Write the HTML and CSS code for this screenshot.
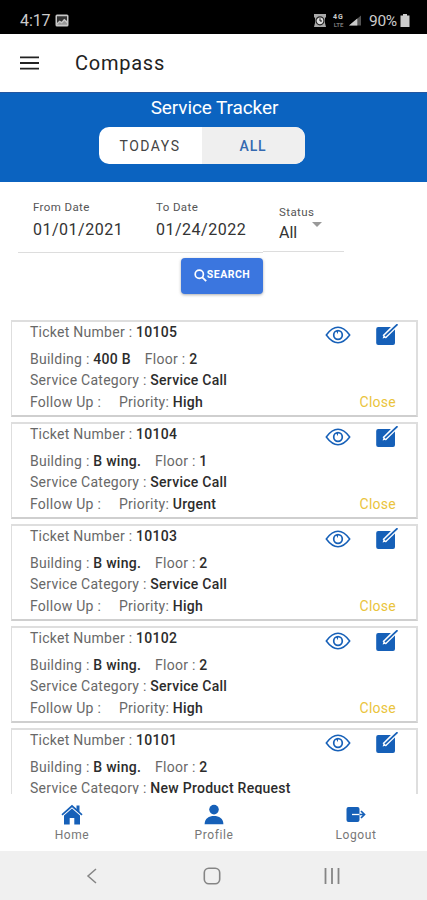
FILE: index.html
```html
<!DOCTYPE html>
<html lang="en">
<head>
<meta charset="utf-8">
<title>Compass</title>
<link rel="stylesheet" href="styles.css">
</head>
<body>
<svg width="0" height="0" class="defs">
  <symbol id="eye" viewBox="0 0 26 18"><path d="M1.3 9Q7 1.3 13 1.3T24.7 9Q19 16.7 13 16.7T1.3 9Z" fill="none" stroke="#1660b8" stroke-width="1.5"/><circle cx="13" cy="9" r="4.3" fill="none" stroke="#1660b8" stroke-width="1.7"/><path d="M11 5L13 8.2V4.800Z" fill="#1660b8"/></symbol>
  <symbol id="edit" viewBox="0 0 22 22"><path d="M2.2 3H17L19 5V19A2 2 0 0 1 17 21H2.2A2 2 0 0 1 .2 19V5A2 2 0 0 1 2.2 3Z" fill="#1660b8"/><path d="M8.2 12.8L21 .2" stroke="#fff" stroke-width="4.6"/><path d="M6.6 14.6L8 10.600L10.700 13.200Z" fill="#fff"/><path d="M9 12.100L21.500 .2" stroke="#1660b8" stroke-width="1.7"/></symbol>
</svg>
<div class="statusbar">
  <span class="time">4:17</span>
  <svg class="photo" width="14" height="13" viewBox="0 0 14 13"><rect x=".5" y=".5" width="13" height="12" rx="1.5" fill="#c8c8c8"/><path d="M2 2.3H12V7L9.2 4.8L6.6 7.8L4.6 6.5L2 9Z" fill="#333"/><path d="M2 10.7L4.7 8.3L6.8 9.6L9.3 6.8L12 9.3V10.7Z" fill="#999"/></svg>
  <span class="grow"></span>
  <svg width="12" height="13" viewBox="0 0 12 13"><path d="M0 0H12V3L11 4V9L12 13H0L1 9V4L0 3Z" fill="#aaa"/><circle cx="6" cy="6.8" r="4" fill="#ddd" stroke="#222" stroke-width="1.2"/><path d="M6 4.3V7H8" fill="none" stroke="#111"/></svg>
  <span class="lte"><b>4G</b><b>LTE</b></span>
  <svg class="signal" width="12" height="11" viewBox="0 0 13 11"><path d="M13 0V11H0Z" fill="#555"/><path d="M9 3.400V11H0Z" fill="#ccc"/></svg>
  <span class="percent">90%</span>
  <svg width="10" height="13" viewBox="0 0 10 13"><path d="M3 0H7V1.5H9.5V13H.5V1.5H3Z" fill="#ccc"/></svg>
</div>
<header class="appbar">
  <svg width="19" height="14" viewBox="0 0 19 14"><path d="M0 1.3H19M0 7H19M0 12.7H19" stroke="#222" stroke-width="1.8"/></svg>
  <h1>Compass</h1>
</header>
<section class="banner">
  <h2>Service Tracker</h2>
  <div class="segment"><span>TODAYS</span><span class="on">ALL</span></div>
</section>
<main>
  <div class="filters">
    <div class="dates">
      <div class="field from"><label>From Date</label><span>01/01/2021</span></div>
      <div class="field"><label>To Date</label><span>01/24/2022</span></div>
    </div>
    <div class="status"><label>Status</label><span>All</span><i></i></div>
  </div>
  <button class="search"><svg width="13" height="13" viewBox="0 0 13 13"><circle cx="5.3" cy="5.3" r="4.1" fill="none" stroke="#fff" stroke-width="1.7"/><path d="M8.3 8.3L12.2 12.2" stroke="#fff" stroke-width="1.8"/></svg><span>SEARCH</span></button>
  <div class="list">
    <article class="card"><p class="ticket">Ticket Number : <b>10105</b></p><p>Building : <b class="bld">400 B</b>Floor : <b>2</b></p><p>Service Category : <b>Service Call</b></p><p><span class="follow">Follow Up :</span>Priority: <b>High</b><em>Close</em></p><div class="actions"><svg width="26" height="18"><use href="#eye"/></svg><svg width="22" height="22"><use href="#edit"/></svg></div></article>
    <article class="card"><p class="ticket">Ticket Number : <b>10104</b></p><p>Building : <b class="bld">B wing.</b>Floor : <b>1</b></p><p>Service Category : <b>Service Call</b></p><p><span class="follow">Follow Up :</span>Priority: <b>Urgent</b><em>Close</em></p><div class="actions"><svg width="26" height="18"><use href="#eye"/></svg><svg width="22" height="22"><use href="#edit"/></svg></div></article>
    <article class="card"><p class="ticket">Ticket Number : <b>10103</b></p><p>Building : <b class="bld">B wing.</b>Floor : <b>2</b></p><p>Service Category : <b>Service Call</b></p><p><span class="follow">Follow Up :</span>Priority: <b>High</b><em>Close</em></p><div class="actions"><svg width="26" height="18"><use href="#eye"/></svg><svg width="22" height="22"><use href="#edit"/></svg></div></article>
    <article class="card"><p class="ticket">Ticket Number : <b>10102</b></p><p>Building : <b class="bld">B wing.</b>Floor : <b>2</b></p><p>Service Category : <b>Service Call</b></p><p><span class="follow">Follow Up :</span>Priority: <b>High</b><em>Close</em></p><div class="actions"><svg width="26" height="18"><use href="#eye"/></svg><svg width="22" height="22"><use href="#edit"/></svg></div></article>
    <article class="card"><p class="ticket">Ticket Number : <b>10101</b></p><p>Building : <b class="bld">B wing.</b>Floor : <b>2</b></p><p>Service Category : <b>New Product Request</b></p><div class="actions"><svg width="26" height="18"><use href="#eye"/></svg><svg width="22" height="22"><use href="#edit"/></svg></div></article>
  </div>
</main>
<nav class="tabs">
  <a><svg width="22" height="21" viewBox="0 0 22 21"><path d="M11 4.6L19 11.4V20.5H13.3V14H8.7V20.5H3V11.4Z" fill="#1660b8"/><path d="M1 10.8L11 2L21 10.8" fill="none" stroke="#1660b8" stroke-width="1.7"/><path d="M15.5 1.5H18.5V8L15.5 5.4Z" fill="#1660b8"/></svg><span>Home</span></a>
  <a><svg width="20" height="21" viewBox="0 0 20 21"><circle cx="10" cy="5.6" r="4.8" fill="#1660b8"/><path d="M.6 20.3C.6 14.5 5 12 10 12S19.4 14.5 19.4 20.3Z" fill="#1660b8"/></svg><span>Profile</span></a>
  <a><svg width="20" height="21" viewBox="0 0 20 21"><path d="M2.500 3H11.500A2 2 0 0 1 13.500 5V16A2 2 0 0 1 11.500 18H2.500A2 2 0 0 1 .5 16V5A2 2 0 0 1 2.500 3Z" fill="#1660b8"/><path d="M6 10.500H14" stroke="#fff" stroke-width="1.3"/><path d="M13.500 10.500H18M15 7L18.500 10.500L15 14" fill="none" stroke="#1660b8" stroke-width="1.7"/></svg><span>Logout</span></a>
</nav>
<div class="sysnav">
  <svg width="12" height="16" viewBox="0 0 12 16"><path d="M10 1L2 8L10 15" fill="none" stroke="#858585" stroke-width="1.5"/></svg>
  <svg width="18" height="18" viewBox="0 0 18 18"><rect x="1.3" y="1.3" width="15.4" height="15.4" rx="4.5" fill="none" stroke="#858585" stroke-width="1.6"/></svg>
  <svg width="18" height="16" viewBox="0 0 18 16"><path d="M2.5 0V16M9 0V16M15.500 0V16" stroke="#858585" stroke-width="1.8"/></svg>
</div>
</body>
</html>
```
FILE: styles.css
```css
* { box-sizing: border-box; margin: 0; padding: 0; }
body { width: 427px; height: 900px; overflow: hidden; display: flex; flex-direction: column; background: #fff; font-family: Roboto, sans-serif; color: #333; }
.defs { position: absolute; }
svg { display: block; flex: none; }

.statusbar { height: 34px; flex: none; background: #000; color: #ccc; display: flex; align-items: center; padding: 7px 17px 0 20px; }
.time { font-size: 16px; width: 35px; letter-spacing: -.1px; }
.grow { flex: 1; }
.lte { width: 17px; margin: 0 2px 0 4px; display: flex; flex-direction: column; align-items: center; }
.lte b { font-size: 6px; line-height: 7px; color: #777; }
.lte b:first-child { font-size: 7px; line-height: 8px; letter-spacing: 1px; color: #ccc; }
.signal { margin-right: 8px; }
.percent { font-size: 15.500px; width: 31px; letter-spacing: -.3px; }

.appbar { height: 58px; flex: none; display: flex; align-items: center; padding-left: 20px; gap: 36px; }
h1 { font-size: 20px; font-weight: 400; letter-spacing: .75px; color: #222; }

.banner { height: 90px; flex: none; background: #0b63c0; border-top: 1px solid #2356a0; display: flex; flex-direction: column; align-items: center; }
h2 { font-size: 19px; font-weight: 400; line-height: 22px; margin: 4px 0 8px 2px; letter-spacing: -.1px; color: #fff; }
.segment { width: 206px; height: 37px; margin-right: 24px; border-radius: 10px; overflow: hidden; display: flex; background: #fff; }
.segment span { flex: 1; text-align: center; line-height: 38px; font-size: 14px; letter-spacing: 1.5px; color: #444; }
.segment .on { background: #efefef; color: #3569b0; font-weight: 500; letter-spacing: .8px; }

main { flex: 1; overflow: hidden; display: flex; flex-direction: column; }
.filters { display: flex; align-items: flex-start; padding-left: 18px; height: 71px; flex: none; }
.dates { display: flex; width: 245px; height: 71px; padding: 17px 0 0 15px; border-bottom: 1px solid #ddd; }
.field { display: flex; flex-direction: column; }
.from { width: 123px; }
label { font-size: 11.500px; line-height: 16px; color: #555; letter-spacing: .4px; }
.field span { font-size: 16px; line-height: 19px; margin-top: 5px; letter-spacing: .5px; }
.status { position: relative; width: 81px; height: 70px; padding: 22px 0 0 16px; border-bottom: 1px solid #ddd; display: flex; flex-direction: column; }
.status span { font-size: 16px; line-height: 19px; margin-top: 3px; }
.status i { position: absolute; left: 49px; top: 40px; border: 5px solid transparent; border-top-color: #999; border-bottom: 0; }

.search { margin: 5px 0 0 181px; width: 82px; height: 36px; flex: none; border: 0; border-radius: 4px; background: #3b76df; box-shadow: 0 1px 3px #7779; color: #fff; display: flex; align-items: center; justify-content: center; font: 700 10.500px/12px Roboto, sans-serif; letter-spacing: .5px; padding-bottom: 2px; }

.list { padding: 26px 9px 0 11px; display: flex; flex-direction: column; gap: 5px; }
.card { position: relative; height: 97px; flex: none; border: 1px solid #dedede; border-width: 2px 2px 2px 1px; border-bottom-color: #cfcfcf; padding: 0 20px 0 18px; font-size: 14px; letter-spacing: .26px; color: #686868; }
.card p { height: 21.500px; line-height: 21px; display: block; white-space: nowrap; }
.card .ticket { margin-bottom: 5px; }
.card b { font-weight: 500; color: #2c2c2c; }
.bld { margin-right: 14px; }
.follow { display: inline-block; width: 89px; }
.card em { float: right; font-style: normal; color: #eac43c; }
.actions { position: absolute; right: 18px; top: 2px; display: flex; gap: 25px; }
.actions svg:first-child { margin-top: 2px; }

.tabs { height: 57px; flex: none; background: #fff; display: flex; padding: 10px 0 0 1px; }
.tabs a { flex: 1; display: flex; flex-direction: column; align-items: center; font-size: 12px; line-height: 16px; letter-spacing: .6px; color: #777; gap: 2px; }
.sysnav { height: 49px; flex: none; background: #f0f0f0; display: grid; grid-template-columns: 120px 120px 120px; padding-left: 32px; place-items: center; }
```
